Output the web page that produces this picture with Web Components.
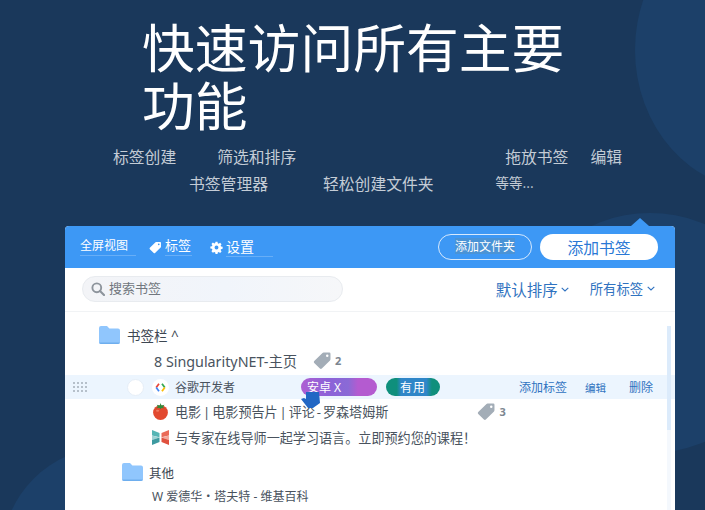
<!DOCTYPE html>
<html lang="zh">
<head>
<meta charset="utf-8">
<title>书签</title>
<style>
html,body{margin:0;padding:0;height:510px;overflow:hidden;background:#1a385b;}
body{font-family:"Noto Sans","Noto Sans CJK SC",sans-serif;}
</style>
</head>
<body>
<promo-page>
  <hero-title slot="hero">快速访问所有主要功能</hero-title>
  <feature-line slot="features" pad="113" style="--g1:41px;--g2:209px;--g3:22px">
    <span>标签创建</span><span>筛选和排序</span><span>拖放书签</span><span>编辑</span>
  </feature-line>
  <feature-line slot="features" pad="189" style="--g1:55px;--g2:62px">
    <span>书签管理器</span><span>轻松创建文件夹</span><span class="small">等等...</span>
  </feature-line>
  <bookmark-panel slot="panel"></bookmark-panel>
</promo-page>

<script>
const ICON = {
  tag:(c,s)=>`<svg width="${s}" height="${s}" viewBox="0 0 20 20"><path fill="${c}" d="M11.2 1.600h6a1.200 1.200 0 0 1 1.200 1.200v6a1.600 1.600 0 0 1-.5 1.100l-8.600 8.600a1.400 1.400 0 0 1-2 0l-6-6a1.400 1.400 0 0 1 0-2l8.700-8.500a1.600 1.600 0 0 1 1.200-.4zM15 3.800a1.300 1.300 0 1 0 0 2.600 1.300 1.300 0 0 0 0-2.600z" fill-rule="evenodd"/></svg>`,
  gear:`<svg width="13" height="13" viewBox="-1 -1 18 18"><path fill="#fff" fill-rule="evenodd" d="M6.600 0h2.800l.4 2.200 1.300.6 1.900-1.300 2 2-1.300 1.900.6 1.300 2.200.4v2.800l-2.200.4-.6 1.300 1.300 1.900-2 2-1.900-1.300-1.300.6-.4 2.200H6.600l-.4-2.200-1.300-.6L3 15.100l-2-2 1.300-1.900-.6-1.300-2.200-.4V6.700l2.200-.4.6-1.300L1 3.100l2-2 1.900 1.300 1.300-.6zM8 5.400a2.700 2.700 0 1 0 0 5.400 2.700 2.700 0 0 0 0-5.400z"/></svg>`,
  search:`<svg width="14" height="14" viewBox="0 0 14 14"><circle cx="5.800" cy="5.800" r="4.400" fill="none" stroke="#8d949c" stroke-width="1.900"/><path d="M9 9l4 4" stroke="#8d949c" stroke-width="2.200" stroke-linecap="round"/></svg>`,
  chev:c=>`<svg width="8" height="5" viewBox="0 0 8 5"><path d="M.7.8L4 4l3.300-3.200" fill="none" stroke="${c}" stroke-width="1.100"/></svg>`,
  folder:w=>`<svg width="${w}" height="${Math.round(w*.86)}" viewBox="0 0 21 18"><path fill="#90c6fd" d="M2 0h6l2.400 2.400H19a2 2 0 0 1 2 2V16a2 2 0 0 1-2 2H2a2 2 0 0 1-2-2V2a2 2 0 0 1 2-2z"/><path fill="#6eaeee" d="M0 16.400h21V16a2 2 0 0 1-2 2H2a2 2 0 0 1-2-2z"/></svg>`,
  google:`<svg width="17" height="17" viewBox="0 0 17 17"><circle cx="8.500" cy="8.500" r="8.500" fill="#fff"/><path d="M7 4.800L4.200 8.500" stroke="#ea4335" stroke-width="1.800" fill="none"/><path d="M4.200 8.500L7 12.200" stroke="#4285f4" stroke-width="1.800" fill="none"/><path d="M10 4.800l2.800 3.700" stroke="#34a853" stroke-width="1.800" fill="none"/><path d="M12.800 8.500L10 12.200" stroke="#fbbc05" stroke-width="1.800" fill="none"/></svg>`,
  tomato:`<svg width="17" height="17" viewBox="0 0 17 17"><circle cx="8.500" cy="9.600" r="7.400" fill="#e2492f"/><ellipse cx="5.600" cy="7.800" rx="1.600" ry="1" fill="#ee7a5f"/><path fill="#2f8b3c" d="M8.500 0l1 2.400 3-.6-1.600 2.200 1.400 1.200-3-.3-1 1.300-.9-1.400-3 .4 1.500-1.400-1.100-2 3 .6z"/></svg>`,
  flag:`<svg width="17" height="17" viewBox="0 0 17 17"><path fill="#55b5b5" d="M0 1l7.500 3v4.200L0 6.500z"/><path fill="#9ed3d5" d="M0 6.500l7.500 2-7.500 2.500z"/><path fill="#3d9aa0" d="M0 11l7.500-2.500V13L0 16z"/><path fill="#ea6a58" d="M17 1L9.500 4v4.200l7.500-1.700z"/><path fill="#f2a79b" d="M17 6.500l-7.500 2 7.500 2.500z"/><path fill="#e0513f" d="M17 11L9.500 8.500V13L17 16z"/></svg>`
};

function define(name, css, html, init){
  customElements.define(name, class extends HTMLElement{
    constructor(){
      super();
      const root = this.attachShadow({mode:'open'});
      root.innerHTML = `<style>${css}</style>` + (typeof html==='function'?html(this):html);
    }
    connectedCallback(){ if(init) init(this); }
  });
}

define('promo-page',`
  :host{display:block;position:relative;width:705px;height:510px;overflow:hidden;background:#1a385b;}
  .blob{position:absolute;background:#1c4069;border-radius:50%;}
  .b1{left:635px;top:-90px;width:250px;height:280px;}
  .b2{left:2px;top:447px;width:216px;height:216px;}
  .b3{left:520px;top:213px;width:260px;height:240px;}
  .flow{position:relative;display:flex;flex-direction:column;}
  .fs{display:flex;flex-direction:column;gap:7px;margin-top:15px;}
  .pn{margin-top:32px;}
`,`
  <div class="blob b1"></div><div class="blob b2"></div><div class="blob b3"></div>
  <div class="flow">
    <slot name="hero"></slot>
    <div class="fs"><slot name="features"></slot></div>
    <div class="pn"><slot name="panel"></slot></div>
  </div>`);

define('hero-title',`
  :host{display:block;box-sizing:border-box;padding:16px 0 0 142px;width:575px;
    color:#fff;font:400 52.800px/58px "Noto Sans CJK SC","Noto Sans",sans-serif;}
`,`<slot></slot>`);

define('feature-line',`
  :host{display:flex;height:20px;align-items:center;color:#c4ccd6;
    font:400 15.800px/20px "Noto Sans CJK SC","Noto Sans",sans-serif;white-space:nowrap;}
  ::slotted(span:nth-child(2)){margin-left:var(--g1);}
  ::slotted(span:nth-child(3)){margin-left:var(--g2);}
  ::slotted(span:nth-child(4)){margin-left:var(--g3);}
  ::slotted(.small){font-size:13.500px;margin-top:-4px;}
`,`<slot></slot>`,el=>{el.style.paddingLeft=el.getAttribute('pad')+'px';});

define('panel-header',`
  :host{display:flex;align-items:center;height:42px;background:#3d98f5;border-radius:4px 4px 0 0;
    padding:0 17px 0 15px;color:#fff;font-family:"Noto Sans CJK SC",sans-serif;position:relative;}
  .notch{position:absolute;right:26px;top:-8px;width:0;height:0;border:9px solid transparent;border-top:0;border-bottom:8px solid #3d98f5;}
  .lk{border-bottom:1px solid rgba(255,255,255,.22);line-height:18px;padding-bottom:1px;margin-top:-2px;}
  .a{font-size:12px;width:56px;margin-right:13px;}
  .tag{display:flex;align-items:center;gap:3px;width:61px;font-size:13px;}
  .tag .lk{width:27px;}
  .set{display:flex;align-items:center;gap:3px;font-size:14px;}
  .set .lk{width:47px;margin-top:0;}
  .sp{flex:1;}
  .btn{box-sizing:border-box;height:26px;border-radius:13px;display:flex;align-items:center;justify-content:center;}
  .o{width:94px;border:1px solid #d7e9fd;font-size:12px;margin-right:8px;background:#3d98f5;}
  .o span{background:#4a93d6;line-height:16px;margin-top:-3px;}
  .f{width:118px;background:#fff;color:#2a78d5;font-size:15.800px;}
`,`<div class="notch"></div>
  <span class="lk a">全屏视图</span>
  <div class="tag">${ICON.tag('#fff',13)}<span class="lk">标签</span></div>
  <div class="set">${ICON.gear}<span class="lk">设置</span></div>
  <div class="sp"></div>
  <div class="btn o"><span>添加文件夹</span></div>
  <div class="btn f">添加书签</div>`);

define('panel-tools',`
  :host{display:flex;align-items:center;height:44px;box-sizing:border-box;padding:0 20px 2px 17px;
    background:#fff;border-bottom:1px solid #f1f3f5;font-family:"Noto Sans CJK SC",sans-serif;}
  .s{box-sizing:border-box;width:261px;height:26px;border:1px solid #e8ebef;border-radius:13px;
    background:linear-gradient(90deg,#f3f4f7,#f1f5fb 55%,#f6f7f9);display:flex;align-items:center;gap:4px;
    padding-left:8px;color:#71777e;font-size:13px;}
  .s span{margin-top:-2px;}
  .sp{flex:1;}
  .d{display:flex;align-items:center;gap:3px;color:#2f72c0;}
  .d1{font-size:15.500px;margin-right:21px;margin-top:1px;}
  .d2{font-size:13.300px;gap:4px;}
`,`<div class="s">${ICON.search}<span>搜索书签</span></div><div class="sp"></div>
  <div class="d d1"><span>默认排序</span>${ICON.chev('#2f72c0')}</div>
  <div class="d d2"><span>所有标签</span>${ICON.chev('#2f72c0')}</div>`);

define('folder-row',`
  :host{display:flex;align-items:center;gap:6px;color:#3d4752;font-family:"Noto Sans","Noto Sans CJK SC",sans-serif;white-space:nowrap;}
  :host([level="1"]){padding-left:34px;height:23px;font-size:13.500px;gap:7px;}
  :host([level="2"]){padding-left:57px;height:26px;font-size:12.500px;}
`,`<span style="display:flex">${ICON.folder(21)}</span><slot></slot>`);

define('link-row',`
  :host{display:flex;align-items:center;height:26px;padding-left:87px;color:#49535e;
    font-family:"Noto Sans","Noto Sans CJK SC",sans-serif;font-size:13.100px;white-space:nowrap;}
  .fav{display:flex;width:23px;}
  .cnt{display:flex;align-items:center;gap:3px;font-size:11px;font-weight:700;color:#7c8690;}
  :host([plain]){padding-left:89px;font-size:14.300px;}
`,el=>{
  const f=el.getAttribute('fav'), c=el.getAttribute('count'), g=el.getAttribute('gap');
  return (f?`<span class="fav">${ICON[f]}</span>`:'')+`<slot></slot>`+
    (c?`<span class="cnt" style="margin-left:${g}px">${ICON.tag('#a3adb7',19)}${c}</span>`:'');
});

define('tag-pill',`
  :host{display:inline-flex;align-items:center;box-sizing:border-box;height:18px;border-radius:9px;color:#fff;
    font-family:"Noto Sans","Noto Sans CJK SC",sans-serif;font-size:12px;white-space:nowrap;}
  :host([kind="a"]){width:76px;padding-left:6px;background:linear-gradient(90deg,#ae5fd2 0,#8d62d8 35%,#8a6ad6 62%,#b45bd0 75%,#b45bd0 100%);}
  :host([kind="b"]){width:54px;justify-content:center;background:linear-gradient(90deg,#0f8f7c 0,#0f8f7c 20%,#2f86c8 28%,#2f86c8 75%,#0f8f7c 85%);letter-spacing:1px;}
`,`<slot></slot>`);

define('active-row',`
  :host{display:flex;align-items:center;height:24px;margin:3px 0 0;background:#ecf5fe;padding-left:8px;position:relative;
    font-family:"Noto Sans","Noto Sans CJK SC",sans-serif;color:#49535e;font-size:12px;white-space:nowrap;}
  .dots{display:grid;grid-template-columns:repeat(4,2px);grid-auto-rows:2px;gap:2px;width:54px;}
  .dots i{background:#b6c0ca;}
  .c{box-sizing:border-box;width:17px;height:17px;border-radius:50%;background:#fff;border:1px solid #e6eef7;margin-right:8px;}
  .fv{display:flex;margin-right:6px;}
  .t{width:126px;}
  .p2{margin-left:9px;}
  .sp{flex:1;}
  .ac{color:#2f72c0;}
  .a1{margin-right:18px;}
  .a2{margin-right:23px;font-size:10.500px;}
  .a3{margin-right:22px;}
  .hand{position:absolute;left:236px;top:17px;}
`,`<div class="dots">${'<i></i>'.repeat(12)}</div><div class="c"></div><span class="fv">${ICON.google}</span>
  <span class="t">谷歌开发者</span><tag-pill kind="a">安卓 X</tag-pill><tag-pill class="p2" kind="b">有用</tag-pill>
  <div class="sp"></div><span class="ac a1">添加标签</span><span class="ac a2">编辑</span><span class="ac a3">删除</span>
  <svg class="hand" width="19" height="17" viewBox="0 0 19 17"><path fill="#2267c4" d="M5 0h13l1 11-7 5H7L0 7l3-1 2 1z"/></svg>`);

define('bookmark-panel',`
  :host{display:block;width:610px;height:284px;margin-left:65px;background:#fff;border-radius:4px 4px 0 0;position:relative;}
  .list{padding-top:2px;display:flex;flex-direction:column;}
  .track{position:absolute;right:4px;top:100px;bottom:0;width:4px;background:#f4f8fd;}
  .thumb{position:absolute;left:0;top:0;width:4px;height:104px;background:#dcebfb;}
`,`<panel-header></panel-header><panel-tools></panel-tools>
  <div class="list">
    <folder-row level="1" style="margin-top:9px">书签栏 ^</folder-row>
    <link-row plain count="2" gap="16" style="margin-top:1px">8 SingularityNET-主页</link-row>
    <active-row style="margin-top:2px"></active-row>
    <link-row fav="tomato" count="3" gap="89" style="margin-top:-1px;word-spacing:-1.500px">电影 | 电影预告片 | 评论 - 罗森塔姆斯</link-row>
    <link-row fav="flag">与专家在线导师一起学习语言。立即预约您的课程！</link-row>
    <folder-row level="2" style="margin-top:9px">其他</folder-row>
    <link-row style="margin-top:-2px;font-size:12px">W 爱德华・塔夫特 - 维基百科</link-row>
  </div>
  <div class="track"><div class="thumb"></div></div>`);
</script>
</body>
</html>
